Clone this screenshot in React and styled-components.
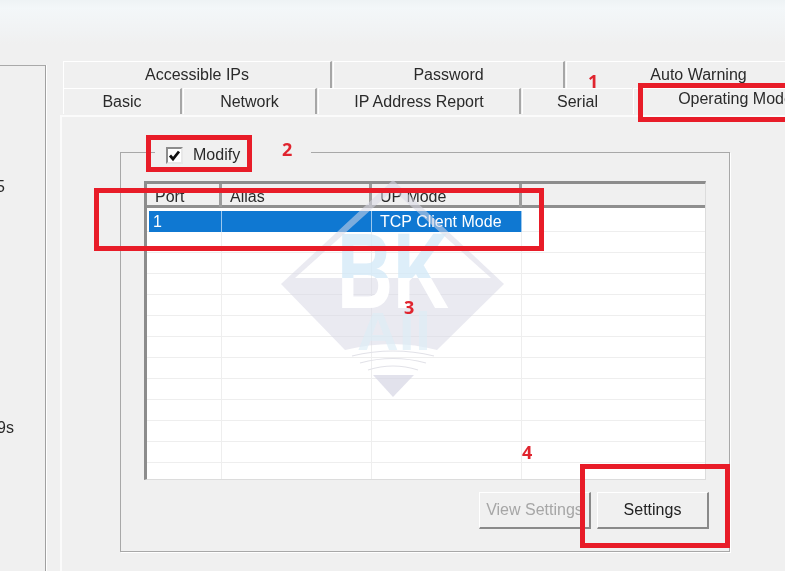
import React from "react";
import styled, { createGlobalStyle } from "styled-components";

const Global = createGlobalStyle`
  html, body { margin: 0; padding: 0; background: #f0f0f0; }
  body { font-family: "Liberation Sans", Arial, sans-serif; color: #2a2a2a; }
`;

const Page = styled.div`
  position: relative;
  width: 785px;
  height: 571px;
  overflow: hidden;
  display: flex;
  background: linear-gradient(180deg, #eef3f5 0, #f3f7f9 8px, #f1f3f4 30px, #f0f0f0 44px);
  filter: blur(0.35px);
`;

const LeftPane = styled.aside`
  flex: none;
  box-sizing: border-box;
  width: 46px;
  height: 506px;
  margin-top: 65px;
  border-top: 1px solid #a9a9a9;
  border-right: 1px solid #a0a0a0;
  box-shadow: 1px 0 0 #fff;
`;

const Readout = styled.div`
  font-size: 16px;
  line-height: 20px;
  margin-left: ${(p) => p.$left}px;
  margin-top: ${(p) => p.$top}px;
`;

const Main = styled.main`
  flex: 1;
  min-width: 0;
  padding-top: 61px;
`;

const TabRow = styled.div`
  display: flex;
  gap: ${(p) => p.$gap}px;
  margin-left: 17px;
  height: ${(p) => p.$h}px;
  width: 900px;
`;

const Tab = styled.div`
  flex: none;
  box-sizing: border-box;
  width: ${(p) => p.$w}px;
  height: 100%;
  display: flex;
  align-items: center;
  justify-content: center;
  padding-bottom: ${(p) => (p.$active ? 6 : 0)}px;
  font-size: 16px;
  letter-spacing: 0;
  background: #f0f0f0;
  border-top: 1px solid #fff;
  border-left: 1px solid #fff;
  border-right: ${(p) => (p.$flat ? "0" : "2px solid #a6a6a6")};
`;

const Panel = styled.section`
  box-sizing: border-box;
  margin-left: 14px;
  margin-top: 1px;
  height: 460px;
  width: 760px;
  border-top: 2px solid #fbfbfb;
  border-left: 2px solid #fbfbfb;
  padding: 23px 0 0 58px;
`;

const Group = styled.fieldset`
  box-sizing: border-box;
  width: 610px;
  height: 412px;
  margin: 0;
  padding: 0;
  border: 1px solid #a8a8a8;
  box-shadow: 1px 1px 0 #fff;
`;

const Legend = styled.legend`
  box-sizing: border-box;
  width: 156px;
  height: 24px;
  margin-left: 34px;
  padding: 6px 0 0 11px;
  background: #f0f0f0;
  display: flex;
  align-items: center;
  gap: 10px;
  font-size: 16px;
`;

const Check = styled.span`
  box-sizing: border-box;
  width: 17px;
  height: 17px;
  display: flex;
  align-items: center;
  justify-content: center;
  background: #fff;
  border: 2px solid #8c8c8c;
  border-right-color: #e8e8e8;
  border-bottom-color: #e8e8e8;
`;

const Table = styled.div`
  box-sizing: border-box;
  width: 562px;
  height: 299px;
  margin: 17px 0 0 23px;
  border-left: 3px solid #8c8c8c;
  border-top: 3px solid #8c8c8c;
  border-right: 1px solid #dcdcdc;
  border-bottom: 1px solid #dcdcdc;
  background: #fff;
  overflow: hidden;
`;

const Columns = "75px 150px 150px 1fr";

const HeaderRow = styled.div`
  box-sizing: border-box;
  display: grid;
  grid-template-columns: ${Columns};
  height: 24px;
  background: #f0f0f0;
  border-bottom: 3px solid #8f8f8f;
`;

const HeaderCell = styled.div`
  box-sizing: border-box;
  padding: 3px 0 0 8px;
  font-size: 16px;
  line-height: 20px;
  border-right: 3px solid #9c9c9c;
  &:last-child { border-right: 0; }
`;

const Body = styled.div`
  padding-top: 3px;
`;

const Row = styled.div`
  display: grid;
  grid-template-columns: ${Columns};
  height: 21px;
  box-sizing: border-box;
  border-bottom: 1px solid #eeeeee;
`;

const Cell = styled.div`
  box-sizing: border-box;
  font-size: 16px;
  line-height: 21px;
  padding-left: ${(p) => p.$pad ?? 8}px;
  border-right: 1px solid ${(p) => (p.$selected ? "#9cc8ee" : "#eeeeee")};
  color: ${(p) => (p.$selected ? "#fff" : "#222")};
  background: ${(p) => (p.$selected ? "#0f78d2" : "transparent")};
  margin-left: ${(p) => (p.$first ? 2 : 0)}px;
  &:last-child { border-right: 0; }
`;

const Actions = styled.div`
  display: flex;
  justify-content: flex-end;
  gap: 6px;
  margin: 12px 20px 0 0;
`;

const Button = styled.button`
  box-sizing: border-box;
  width: 112px;
  height: 37px;
  padding: 0;
  font: 16px "Liberation Sans", Arial, sans-serif;
  color: ${(p) => (p.disabled ? "#a6a6a6" : "#222")};
  background: #f0f0f0;
  border: 0;
  border-top: 1px solid #fff;
  border-left: 1px solid #fff;
  border-right: 2px solid #8a8a8a;
  border-bottom: 2px solid #8a8a8a;
  white-space: nowrap;
  overflow: hidden;
`;

const Watermark = styled.svg`
  position: absolute;
  left: 275px;
  top: 175px;
  pointer-events: none;
`;

const RedBox = styled.div`
  position: absolute;
  box-sizing: border-box;
  left: ${(p) => p.$x}px;
  top: ${(p) => p.$y}px;
  width: ${(p) => p.$w}px;
  height: ${(p) => p.$h}px;
  border: 5px solid #e81c28;
`;

const StepNumber = styled.span`
  position: absolute;
  left: ${(p) => p.$x}px;
  top: ${(p) => p.$y}px;
  font: 700 18px/22px "Open Sans", "Liberation Sans", sans-serif;
  color: #e0242e;
`;

const rows = Array.from({ length: 13 }, (_, i) => i);

function Logo() {
  return (
    <Watermark width="240" height="230" viewBox="275 175 240 230" aria-hidden="true">
      <defs>
        <clipPath id="upper"><rect x="275" y="175" width="240" height="103" /></clipPath>
        <clipPath id="lower"><rect x="275" y="278" width="240" height="40" /></clipPath>
      </defs>
      <path
        d="M281 284 L393 180 L504 284 L437 350 Q393 338 345 350 Z M295 278 H491 L393 190 Z"
        fill="#d8d8e6"
        fillOpacity="0.55"
        fillRule="evenodd"
      />
      <path d="M373 375 H414 L393 397 Z" fill="#d6d6e4" fillOpacity="0.7" />
      <text x="337" y="308" fontFamily="Liberation Sans" fontWeight="700" fontSize="108" textLength="112" lengthAdjust="spacingAndGlyphs" fill="#d2e8f7" fillOpacity="0.75" clipPath="url(#upper)">BK</text>
      <text x="337" y="308" fontFamily="Liberation Sans" fontWeight="700" fontSize="108" textLength="112" lengthAdjust="spacingAndGlyphs" fill="#ffffff" clipPath="url(#lower)">BK</text>
      <text x="357" y="350" fontFamily="Liberation Sans" fontWeight="700" fontSize="54" textLength="74" lengthAdjust="spacingAndGlyphs" fill="#dcecf6" fillOpacity="0.65">All</text>
      <g fill="none" stroke="#e2e2e8" strokeWidth="1.2">
        <path d="M352 356 Q393 346 434 356" />
        <path d="M360 363 Q393 354 426 363" />
        <path d="M368 370 Q393 362 418 370" />
      </g>
    </Watermark>
  );
}

export default function App() {
  return (
    <>
      <Global />
      <Page>
        <LeftPane>
          <Readout $left={-4} $top={111}>5</Readout>
          <Readout $left={-3} $top={221}>9s</Readout>
        </LeftPane>
        <Main>
          <TabRow $gap={1} $h={27}>
            <Tab $w={269}>Accessible IPs</Tab>
            <Tab $w={232}>Password</Tab>
            <Tab $w={264} $flat>Auto Warning</Tab>
          </TabRow>
          <TabRow $gap={1} $h={26}>
            <Tab $w={119}>Basic</Tab>
            <Tab $w={134}>Network</Tab>
            <Tab $w={203}>IP Address Report</Tab>
            <Tab $w={110} $flat>Serial</Tab>
            <Tab $w={204} $flat $active>Operating Mode</Tab>
          </TabRow>
          <Panel>
            <Group>
              <Legend>
                <Check>
                  <svg width="13" height="13" viewBox="0 0 13 13" aria-hidden="true">
                    <path d="M2 6.5 L5 10 L11 2.5" fill="none" stroke="#111" strokeWidth="2.8" />
                  </svg>
                </Check>
                Modify
              </Legend>
              <Table>
                <HeaderRow>
                  <HeaderCell>Port</HeaderCell>
                  <HeaderCell>Alias</HeaderCell>
                  <HeaderCell>UP Mode</HeaderCell>
                  <HeaderCell />
                </HeaderRow>
                <Body>
                  <Row>
                    <Cell $selected $first $pad={4}>1</Cell>
                    <Cell $selected />
                    <Cell $selected>TCP Client Mode</Cell>
                    <Cell />
                  </Row>
                  {rows.map((r) => (
                    <Row key={r}>
                      <Cell /><Cell /><Cell /><Cell />
                    </Row>
                  ))}
                </Body>
              </Table>
              <Actions>
                <Button disabled>View Settings</Button>
                <Button>Settings</Button>
              </Actions>
            </Group>
          </Panel>
        </Main>
        <Logo />
        <RedBox $x={638} $y={83} $w={160} $h={39} />
        <RedBox $x={146} $y={135} $w={106} $h={37} />
        <RedBox $x={94} $y={188} $w={450} $h={63} />
        <RedBox $x={580} $y={464} $w={150} $h={84} />
        <StepNumber $x={588} $y={70}>1</StepNumber>
        <StepNumber $x={282} $y={138}>2</StepNumber>
        <StepNumber $x={404} $y={296}>3</StepNumber>
        <StepNumber $x={522} $y={441}>4</StepNumber>
      </Page>
    </>
  );
}
